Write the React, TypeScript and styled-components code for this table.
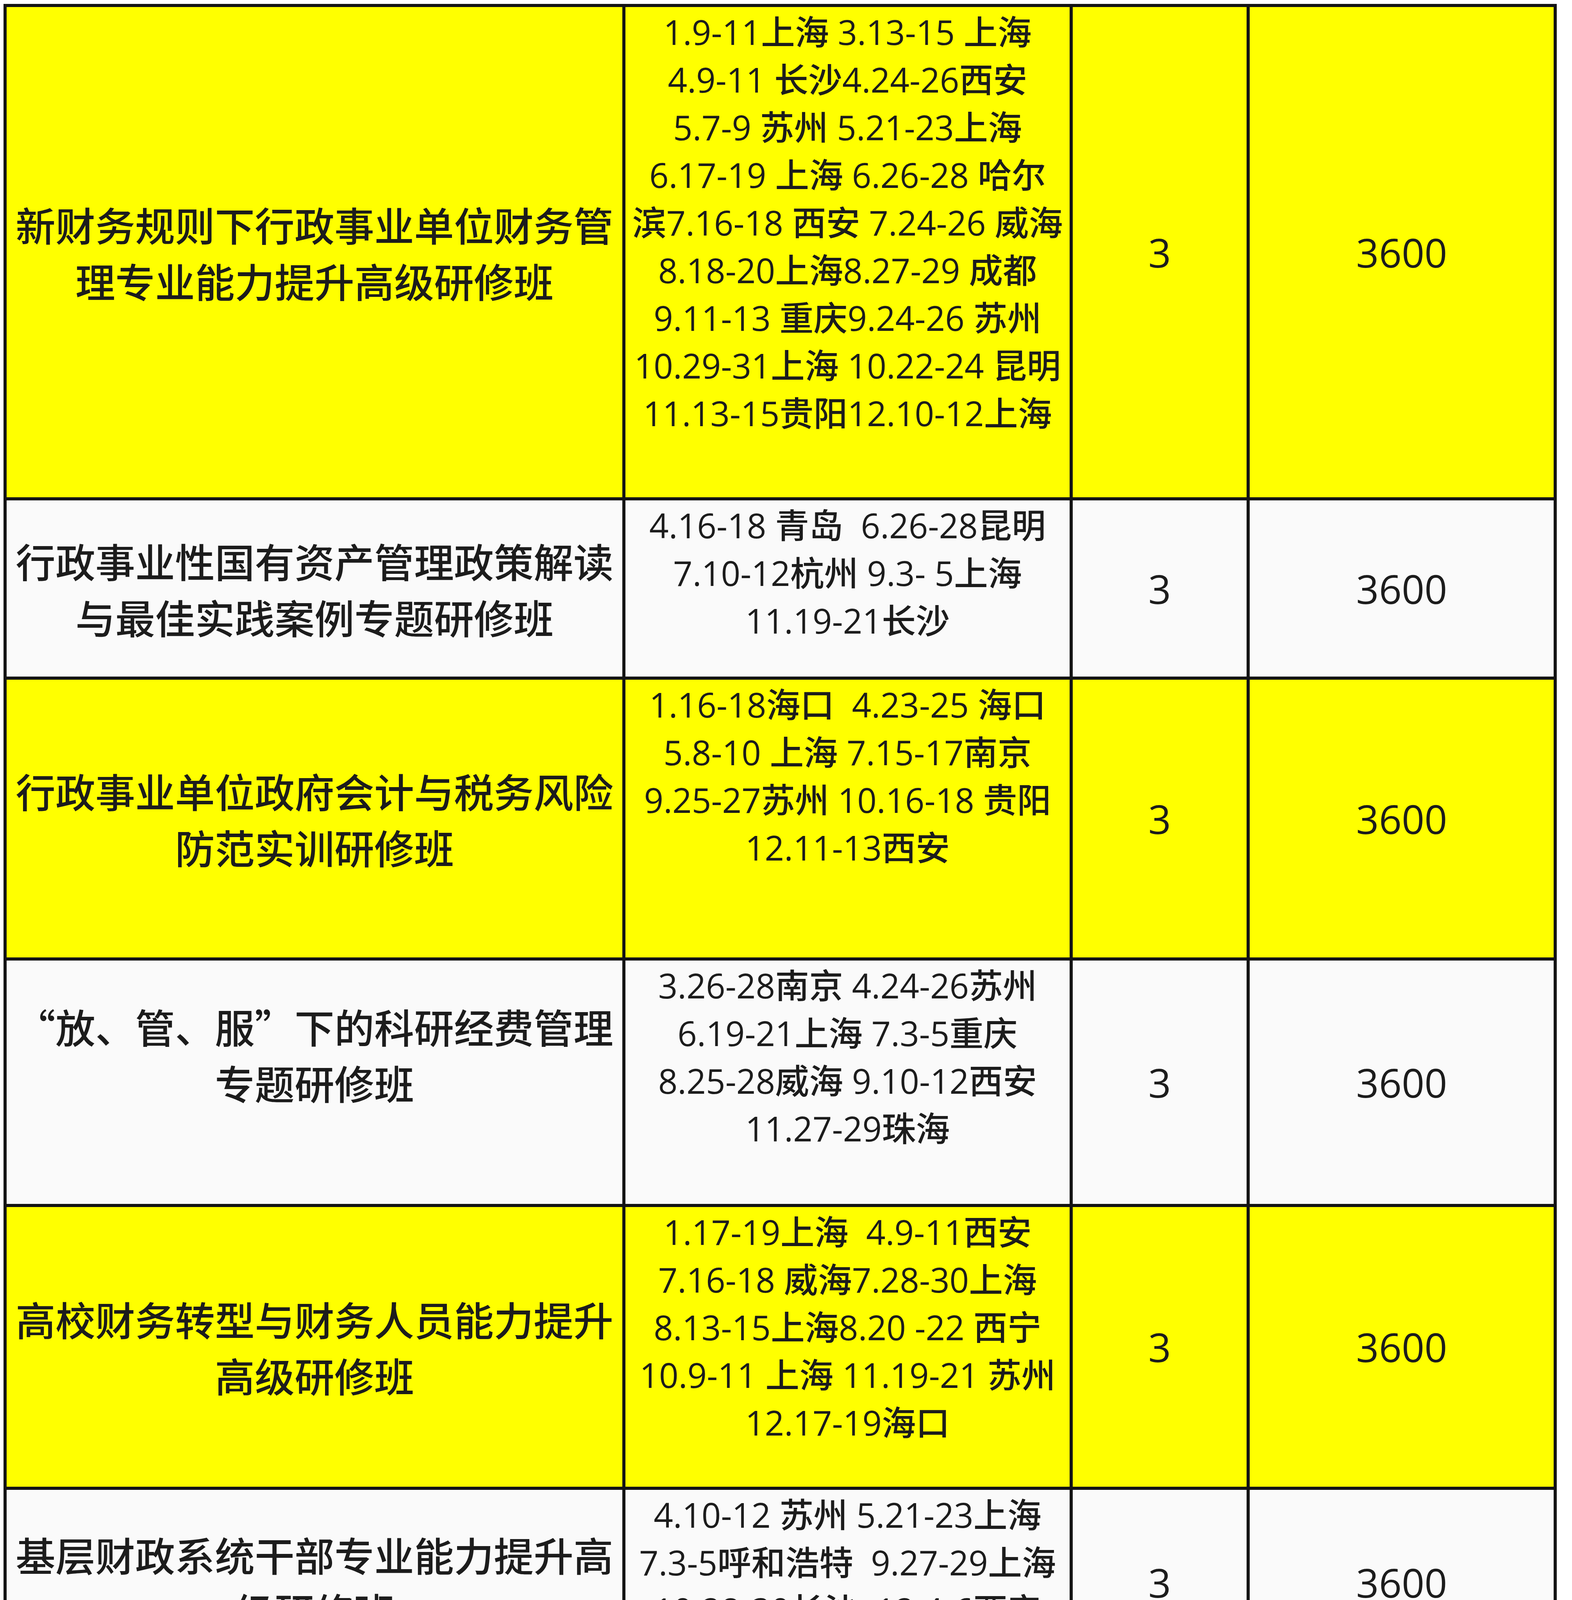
import React from "react";
import styled, { createGlobalStyle } from "styled-components";

const GlobalStyle = createGlobalStyle`
  html, body {
    margin: 0;
    padding: 0;
    background: #ffffff;
  }
  body {
    font-family: "Noto Sans CJK SC", sans-serif;
    color: #1c1c1c;
  }
`;

const YELLOW = "#ffff00";
const WHITE = "#fafafa";

const Page = styled.div`
  padding: 10px 0 0 9px;
`;

const Table = styled.div`
  display: flex;
  flex-direction: column;
  gap: 8px;
  width: max-content;
  padding: 8px;
  background: #141414;
`;

const Row = styled.div<{ $h: number }>`
  display: grid;
  grid-template-columns: 1576px 1137px 445px 778px;
  gap: 8px;
  height: ${(p) => p.$h}px;
`;

const Cell = styled.div<{ $bg: string }>`
  background: ${(p) => p.$bg};
  display: flex;
  justify-content: center;
  text-align: center;
`;

const TitleCell = styled(Cell)<{ $extraLine?: boolean }>`
  align-items: center;
  padding: 0 16px ${(p) => (p.$extraLine ? "144px" : "0")};
  font-family: "Noto Sans CJK SC", sans-serif;
  font-size: 102px;
  line-height: 144px;
  font-weight: 500;
`;

const DatesCell = styled(Cell)`
  flex-direction: column;
  align-items: center;
  justify-content: flex-start;
  padding-top: 2px;
  font-family: "Open Sans", "Noto Sans CJK SC", sans-serif;
  font-size: 87px;
  line-height: 122px;
  font-weight: 500;
`;

const DateLine = styled.div`
  white-space: pre;
`;

const NumberCell = styled(Cell)`
  align-items: center;
  font-family: "Open Sans", "Noto Sans CJK SC", sans-serif;
  font-size: 102px;
  line-height: 1;
  font-weight: 400;
`;

type Course = {
  bg: string;
  title: string;
  dates: string[];
  days: string;
  price: string;
  height: number;
  extraLine?: boolean;
};

const courses: Course[] = [
  {
    bg: YELLOW,
    title: "新财务规则下行政事业单位财务管理专业能力提升高级研修班",
    dates: [
      "1.9-11上海 3.13-15 上海",
      "4.9-11 长沙4.24-26西安",
      "5.7-9 苏州 5.21-23上海",
      "6.17-19 上海 6.26-28 哈尔",
      "滨7.16-18 西安 7.24-26 威海",
      "8.18-20上海8.27-29 成都",
      "9.11-13 重庆9.24-26 苏州",
      "10.29-31上海 10.22-24 昆明",
      "11.13-15贵阳12.10-12上海",
    ],
    days: "3",
    price: "3600",
    height: 1255,
  },
  {
    bg: WHITE,
    title: "行政事业性国有资产管理政策解读与最佳实践案例专题研修班",
    dates: ["4.16-18 青岛  6.26-28昆明", "7.10-12杭州 9.3- 5上海", "11.19-21长沙"],
    days: "3",
    price: "3600",
    height: 451,
  },
  {
    bg: YELLOW,
    title: "行政事业单位政府会计与税务风险防范实训研修班",
    dates: [
      "1.16-18海口  4.23-25 海口",
      "5.8-10 上海 7.15-17南京",
      "9.25-27苏州 10.16-18 贵阳",
      "12.11-13西安",
    ],
    days: "3",
    price: "3600",
    height: 711,
  },
  {
    bg: WHITE,
    title: "“放、管、服”下的科研经费管理专题研修班",
    dates: [
      "3.26-28南京 4.24-26苏州",
      "6.19-21上海 7.3-5重庆",
      "8.25-28威海 9.10-12西安",
      "11.27-29珠海",
    ],
    days: "3",
    price: "3600",
    height: 623,
    extraLine: true,
  },
  {
    bg: YELLOW,
    title: "高校财务转型与财务人员能力提升高级研修班",
    dates: [
      "1.17-19上海  4.9-11西安",
      "7.16-18 威海7.28-30上海",
      "8.13-15上海8.20 -22 西宁",
      "10.9-11 上海 11.19-21 苏州",
      "12.17-19海口",
    ],
    days: "3",
    price: "3600",
    height: 716,
  },
  {
    bg: WHITE,
    title: "基层财政系统干部专业能力提升高级研修班",
    dates: ["4.10-12 苏州 5.21-23上海", "7.3-5呼和浩特  9.27-29上海", "10.28-30长沙  12.4-6西安"],
    days: "3",
    price: "3600",
    height: 474,
  },
];

export default function App() {
  return (
    <Page lang="zh-CN">
      <GlobalStyle />
      <Table>
        {courses.map((c, i) => (
          <Row key={i} $h={c.height}>
            <TitleCell $bg={c.bg} $extraLine={c.extraLine}>
              {c.title}
            </TitleCell>
            <DatesCell $bg={c.bg}>
              {c.dates.map((d, j) => (
                <DateLine key={j}>{d}</DateLine>
              ))}
            </DatesCell>
            <NumberCell $bg={c.bg}>{c.days}</NumberCell>
            <NumberCell $bg={c.bg}>{c.price}</NumberCell>
          </Row>
        ))}
      </Table>
    </Page>
  );
}
